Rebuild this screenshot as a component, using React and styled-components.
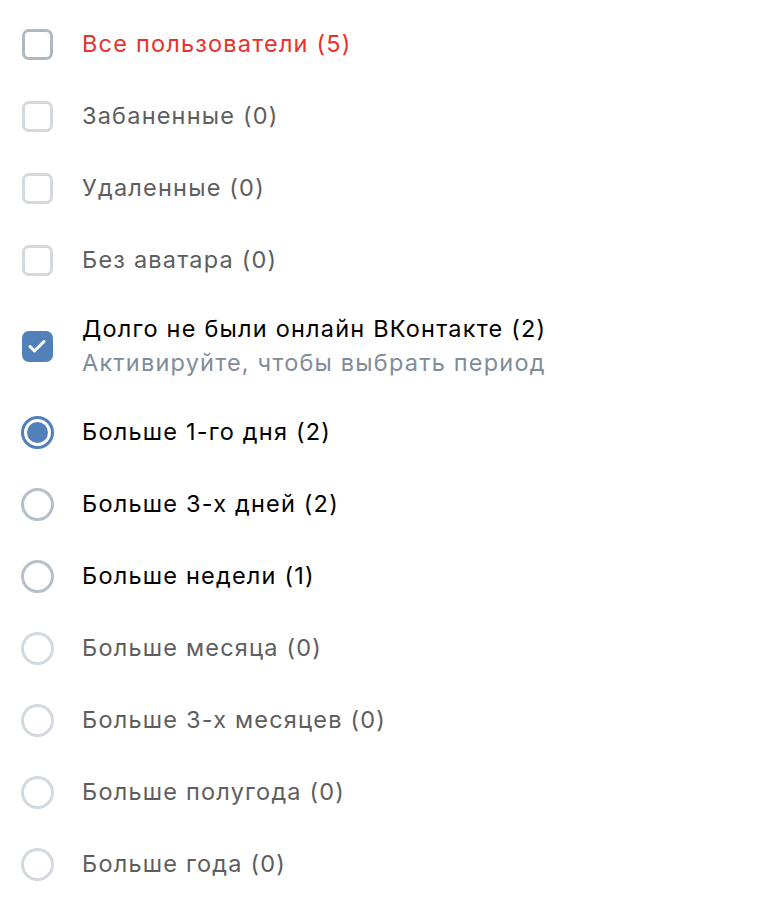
import React from "react";
import styled, { createGlobalStyle } from "styled-components";

const Global = createGlobalStyle`
  html, body { margin: 0; padding: 0; background: #fff; }
  body { font-family: Inter, "Noto Sans", "Liberation Sans", sans-serif; -webkit-font-smoothing: antialiased; }
`;

const List = styled.div`
  display: flex;
  flex-direction: column;
  padding: 8px 0 0 20px;
`;

const Row = styled.label`
  display: flex;
  align-items: center;
  gap: 28px;
  min-height: ${(p) => (p.$tall ? 100 : 72)}px;
`;

const IconSlot = styled.div`
  width: 34px;
  height: 34px;
  flex: none;
  display: flex;
  align-items: center;
  justify-content: center;
`;

const Box = styled.div`
  box-sizing: border-box;
  width: 31px;
  height: 31px;
  border-radius: 7px;
  border: 3px solid ${(p) => p.$border};
  background: ${(p) => (p.$checked ? "#5181b8" : "#fff")};
  display: flex;
  align-items: center;
  justify-content: center;
`;

const Radio = styled.div`
  box-sizing: border-box;
  width: 33px;
  height: 33px;
  border-radius: 50%;
  border: 3px solid ${(p) => (p.$checked ? "#5181b8" : p.$border)};
  display: flex;
  align-items: center;
  justify-content: center;
`;

const Dot = styled.div`
  width: 21px;
  height: 21px;
  border-radius: 50%;
  background: #5181b8;
`;

const Texts = styled.div`
  display: flex;
  flex-direction: column;
  gap: 6px;
`;

const Title = styled.span`
  font-size: 23.5px;
  line-height: 28px;
  color: ${(p) => p.$color};
  letter-spacing: 1.2px;
`;

const Sub = styled(Title)`
  color: #818c99;
`;

const Check = () => (
  <svg width="20" height="16" viewBox="0 0 20 16" fill="none">
    <path d="M3 8.5l4.5 4.5L17 3.5" stroke="#fff" strokeWidth="3" strokeLinecap="round" strokeLinejoin="round" />
  </svg>
);

const checks = [
  { t: "Все пользователи (5)", color: "#e8322b", border: "#aeb7c2" },
  { t: "Забаненные (0)", color: "#5e5e5e", border: "#d3d9de" },
  { t: "Удаленные (0)", color: "#5e5e5e", border: "#d3d9de" },
  { t: "Без аватара (0)", color: "#5e5e5e", border: "#d3d9de" },
];

const radios = [
  { t: "Больше 1-го дня (2)", checked: true, color: "#000", border: "#aeb7c2" },
  { t: "Больше 3-х дней (2)", color: "#000", border: "#b6bfca" },
  { t: "Больше недели (1)", color: "#000", border: "#b6bfca" },
  { t: "Больше месяца (0)", color: "#5e5e5e", border: "#d3d9de" },
  { t: "Больше 3-х месяцев (0)", color: "#5e5e5e", border: "#d3d9de" },
  { t: "Больше полугода (0)", color: "#5e5e5e", border: "#d3d9de" },
  { t: "Больше года (0)", color: "#5e5e5e", border: "#d3d9de" },
];

export default function App() {
  return (
    <>
      <Global />
      <List>
        {checks.map((c) => (
          <Row key={c.t}>
            <IconSlot>
              <Box $border={c.border} />
            </IconSlot>
            <Title $color={c.color}>{c.t}</Title>
          </Row>
        ))}
        <Row $tall>
          <IconSlot>
            <Box $checked $border="#5181b8">
              <Check />
            </Box>
          </IconSlot>
          <Texts>
            <Title $color="#000">Долго не были онлайн ВКонтакте (2)</Title>
            <Sub>Активируйте, чтобы выбрать период</Sub>
          </Texts>
        </Row>
        {radios.map((r) => (
          <Row key={r.t}>
            <IconSlot>
              <Radio $checked={r.checked} $border={r.border}>
                {r.checked && <Dot />}
              </Radio>
            </IconSlot>
            <Title $color={r.color}>{r.t}</Title>
          </Row>
        ))}
      </List>
    </>
  );
}
